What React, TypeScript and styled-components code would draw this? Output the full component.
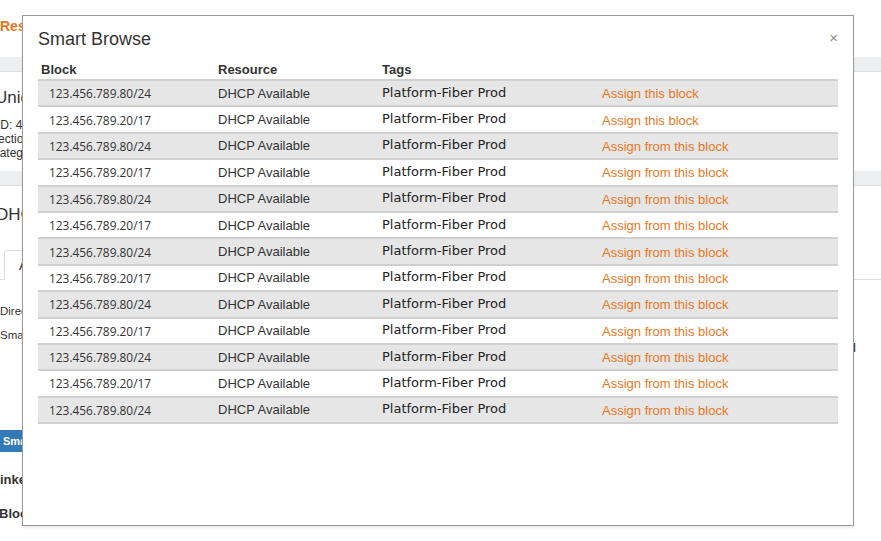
import React from "react";
import styled, { createGlobalStyle } from "styled-components";

const GlobalStyle = createGlobalStyle`
  html, body {
    margin: 0;
    padding: 0;
    background: #ffffff;
    font-family: "Liberation Sans", Arial, sans-serif;
    color: #333333;
  }
  * { box-sizing: border-box; }
`;

const Screen = styled.div`
  position: relative;
  width: 881px;
  height: 541px;
  overflow: hidden;
  background: #ffffff;
`;

/* ---------- background page ---------- */

const Page = styled.div`
  display: flex;
  flex-direction: column;
`;

const Brand = styled.div`
  height: 57px;
  padding-top: 17px;
  font-size: 14px;
  line-height: 18px;
  font-weight: 700;
  color: #e8781e;
`;

const Band = styled.div<{ $top?: number }>`
  height: 15px;
  margin-top: ${(p) => p.$top ?? 0}px;
  background: #eceef0;
  border-bottom: 1px solid #dcdfe2;
`;

const BigTitle = styled.div<{ $top: number; $shift?: number }>`
  margin-top: ${(p) => p.$top}px;
  font-size: 17px;
  line-height: 24px;
  white-space: nowrap;
  text-indent: ${(p) => p.$shift ?? 0}px;
`;

const MetaLine = styled.div<{ $top?: number; $shift?: number }>`
  margin-top: ${(p) => p.$top ?? 0}px;
  font-size: 12px;
  line-height: 14px;
  white-space: nowrap;
  text-indent: ${(p) => p.$shift ?? 0}px;
`;

const TabStrip = styled.div`
  margin-top: 23px;
  height: 30px;
  display: flex;
  padding-left: 4px;
  border-bottom: 1px solid #dddddd;
`;

const Tab = styled.div`
  height: 30px;
  padding: 0 14px;
  border: 1px solid #dddddd;
  border-bottom: none;
  border-radius: 4px 4px 0 0;
  font-size: 14px;
  line-height: 28px;
  background: #ffffff;
`;

const BodyText = styled.div<{ $top: number }>`
  margin-top: ${(p) => p.$top}px;
  font-size: 11.5px;
  line-height: 16px;
  white-space: nowrap;
`;

const RightNote = styled.div`
  margin-top: -2px;
  width: 856px;
  overflow: hidden;
  white-space: nowrap;
  text-align: right;
  font-size: 13px;
  line-height: 14px;
`;

const BlueButton = styled.div`
  margin-top: 75px;
  align-self: flex-start;
  height: 22px;
  padding: 0 4px 0 3px;
  background: #337ab7;
  color: #ffffff;
  font-size: 11px;
  font-weight: 700;
  line-height: 22px;
  border-radius: 0 3px 3px 0;
  white-space: nowrap;
`;

const BoldLabel = styled.div<{ $top: number; $shift?: number }>`
  margin-top: ${(p) => p.$top}px;
  font-size: 13px;
  line-height: 16px;
  font-weight: 700;
  white-space: nowrap;
  text-indent: ${(p) => p.$shift ?? 0}px;
`;

/* ---------- modal ---------- */

const Modal = styled.div`
  position: absolute;
  top: 15px;
  left: 22px;
  width: 832px;
  height: 511px;
  background: #ffffff;
  border: 1px solid #9a9a9a;
  box-shadow: 0 2px 2px rgba(0, 0, 0, 0.08);
  padding: 0 15px;
  display: flex;
  flex-direction: column;
`;

const ModalHeader = styled.div`
  margin-top: 13px;
  display: flex;
  align-items: center;
  justify-content: space-between;
`;

const ModalTitle = styled.div`
  font-size: 18px;
  line-height: 20px;
  color: #333333;
`;

const Close = styled.div`
  font-size: 15px;
  line-height: 20px;
  color: #8a8a8a;
  margin-top: -2px;
`;

const Table = styled.div`
  margin-top: 11px;
  display: flex;
  flex-direction: column;
`;

const HeadRow = styled.div`
  display: grid;
  grid-template-columns: 180px 164px 220px 1fr;
  height: 21px;
  border-bottom: 2px solid #d0d0d0;
  align-items: center;
`;

const HeadCell = styled.div<{ $pad?: number }>`
  padding-left: ${(p) => p.$pad ?? 0}px;
  font-size: 13px;
  line-height: 19px;
  font-weight: 700;
  color: #333333;
`;

const Row = styled.div<{ $shade: boolean }>`
  display: grid;
  grid-template-columns: 180px 164px 220px 1fr;
  height: 26.4px;
  align-items: center;
  background: ${(p) => (p.$shade ? "#e6e6e6" : "#ffffff")};
  border-bottom: 2px solid #d0d0d0;
`;

const BlockCell = styled.div`
  padding-left: 11px;
  font-family: "Open Sans", "Liberation Sans", sans-serif;
  font-size: 11.9px;
  color: #333333;
`;

const ResourceCell = styled.div`
  font-size: 13px;
  color: #333333;
`;

const TagCell = styled.div`
  font-family: "DejaVu Sans", "Liberation Sans", sans-serif;
  font-size: 13px;
  color: #222222;
  margin-top: -2px;
`;

const AssignLink = styled.a`
  font-size: 13px;
  color: #e8781e;
  text-decoration: none;
  cursor: pointer;
`;

const rows = Array.from({ length: 13 }, (_, i) => ({
  block: i % 2 === 0 ? "123.456.789.80/24" : "123.456.789.20/17",
  resource: "DHCP Available",
  tags: "Platform-Fiber Prod",
  action: i < 2 ? "Assign this block" : "Assign from this block",
}));

export default function App() {
  return (
    <Screen>
      <GlobalStyle />
      <Page>
        <Brand>Resources</Brand>
        <Band />
        <BigTitle $top={14} $shift={-5}>Unicorn Network</BigTitle>
        <MetaLine $top={8} $shift={-3}>ID: 4021</MetaLine>
        <MetaLine $shift={-10}>Section: Core</MetaLine>
        <MetaLine $shift={-9}>Category: Network</MetaLine>
        <Band $top={11} />
        <BigTitle $top={17} $shift={-4}>DHCP Blocks</BigTitle>
        <TabStrip>
          <Tab>Assign</Tab>
        </TabStrip>
        <BodyText $top={23}>Direct assignment</BodyText>
        <BodyText $top={8}>Smart Browse</BodyText>
        <RightNote>Choose a block to assign, or browse for available blocks and</RightNote>
        <BlueButton>Smart Browse</BlueButton>
        <BoldLabel $top={20} $shift={-8}>Linked Blocks</BoldLabel>
        <BoldLabel $top={18} $shift={-1}>Block</BoldLabel>
      </Page>

      <Modal>
        <ModalHeader>
          <ModalTitle>Smart Browse</ModalTitle>
          <Close>×</Close>
        </ModalHeader>
        <Table>
          <HeadRow>
            <HeadCell $pad={3}>Block</HeadCell>
            <HeadCell>Resource</HeadCell>
            <HeadCell>Tags</HeadCell>
            <HeadCell />
          </HeadRow>
          {rows.map((r, i) => (
            <Row key={i} $shade={i % 2 === 0}>
              <BlockCell>{r.block}</BlockCell>
              <ResourceCell>{r.resource}</ResourceCell>
              <TagCell>{r.tags}</TagCell>
              <div>
                <AssignLink>{r.action}</AssignLink>
              </div>
            </Row>
          ))}
        </Table>
      </Modal>
    </Screen>
  );
}
